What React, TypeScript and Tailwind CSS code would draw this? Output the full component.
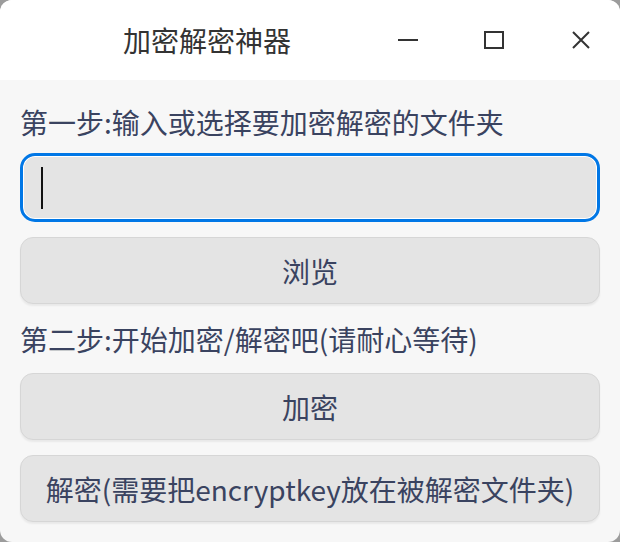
import React from 'react';

const font = { fontFamily: '"Noto Sans CJK SC", "Noto Sans", sans-serif' };

const TitleBar = () => (
  <div className="flex h-[80px] items-center bg-white">
    <div className="w-[388px] pl-[123px] text-[28px] leading-[40px] text-[#333333]">加密解密神器</div>
    <div className="flex flex-1 items-center">
      <button className="flex h-[40px] w-[40px] items-center justify-center">
        <svg width="20" height="20" viewBox="0 0 20 20">
          <line x1="0" y1="10" x2="20" y2="10" stroke="#333" strokeWidth="2" />
        </svg>
      </button>
      <button className="ml-[46px] flex h-[40px] w-[40px] items-center justify-center">
        <svg width="20" height="20" viewBox="0 0 20 20">
          <rect x="1" y="2" width="18" height="16" fill="none" stroke="#333" strokeWidth="2" />
        </svg>
      </button>
      <button className="ml-[47px] flex h-[40px] w-[40px] items-center justify-center">
        <svg width="20" height="20" viewBox="0 0 20 20">
          <path d="M2 2 L18 18 M18 2 L2 18" stroke="#333" strokeWidth="2" />
        </svg>
      </button>
    </div>
  </div>
);

const Btn = ({ children }: { children: React.ReactNode }) => (
  <button className="h-[67px] w-full rounded-[13px] border border-[#d6d6d6] bg-[#e4e4e4] text-[28px] text-[#3a4360] shadow-[0_2px_2px_rgba(0,0,0,0.06)]">
    {children}
  </button>
);

export default function App() {
  return (
    <div className="h-[542px] w-[620px] bg-[#9c9c9c]" style={font}>
      <div className="flex h-full flex-col overflow-hidden rounded-[12px] bg-[#f7f7f7]">
        <TitleBar />
        <div className="flex flex-col px-[20px]">
          <div className="mt-[22px] text-[28px] leading-[40px] text-[#3a4360]">第一步:输入或选择要加密解密的文件夹</div>
          <div className="mt-[11px] flex h-[69px] items-center rounded-[15px] border-[3px] border-[#0077e6] bg-[#e4e4e4] shadow-[inset_0_0_0_1px_#ffffff] pl-[18px]">
            <div className="h-[42px] w-[2px] bg-[#111]" />
          </div>
          <div className="mt-[15px]">
            <Btn>浏览</Btn>
          </div>
          <div className="mt-[15px] text-[28px] leading-[40px] text-[#3a4360]">第二步:开始加密/解密吧(请耐心等待)</div>
          <div className="mt-[14px]">
            <Btn>加密</Btn>
          </div>
          <div className="mt-[15px]">
            <Btn>解密(需要把encryptkey放在被解密文件夹)</Btn>
          </div>
        </div>
      </div>
    </div>
  );
}
